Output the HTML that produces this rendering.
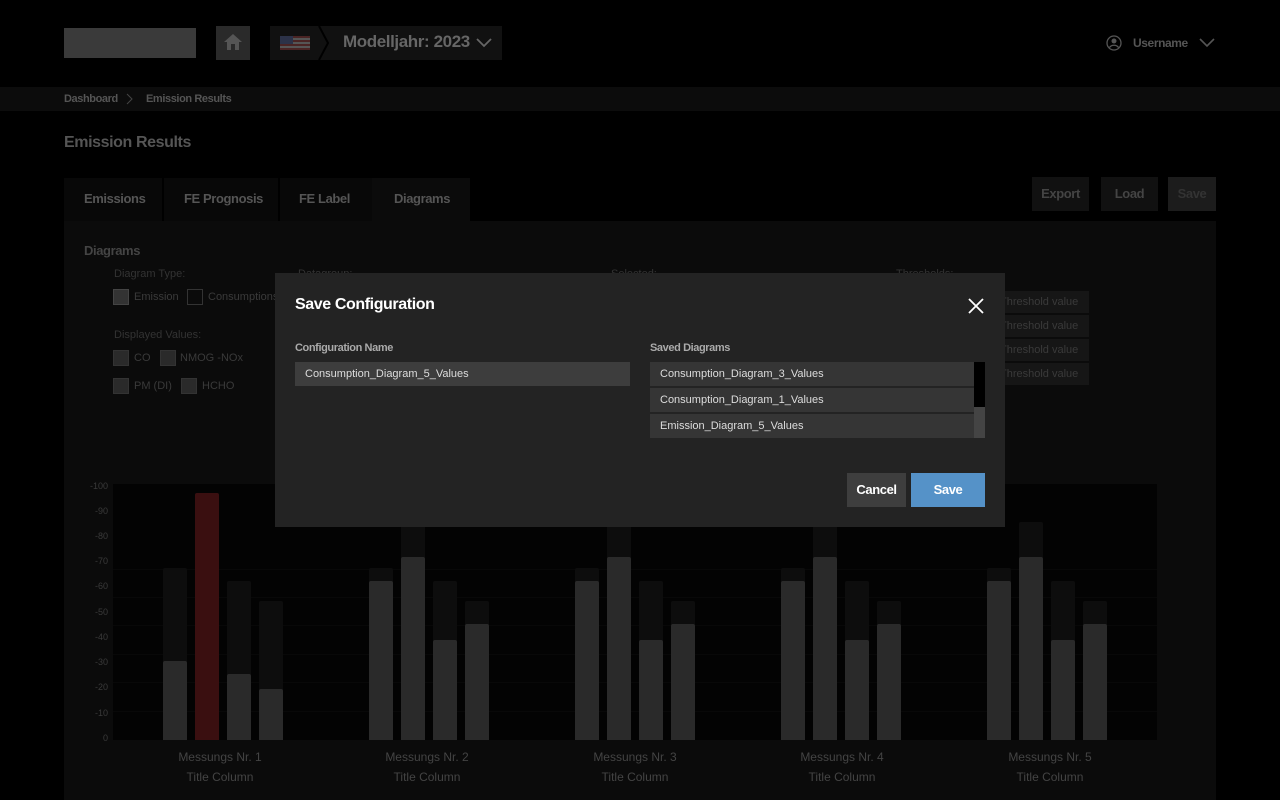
<!DOCTYPE html>
<html><head><style>
*{margin:0;padding:0;box-sizing:border-box}
body{width:1280px;height:800px;background:#000;font-family:"Liberation Sans",sans-serif;position:relative;overflow:hidden;color:#555}
.a{position:absolute}
.t{font-weight:bold;letter-spacing:-0.4px}
.bar{position:absolute;width:24px;border-radius:2px 2px 0 0}
.yl{position:absolute;left:78px;width:30px;text-align:right;font-size:9px;color:#3a3a3a}
.gl{position:absolute;left:113px;width:1044px;height:1px;background:#080808}
.lab{position:absolute;width:160px;text-align:center;font-size:12px;color:#444}
.cb{position:absolute;width:16px;height:16px;background:#2a2a2a;border:1px solid #333}
.sd{position:absolute;left:650px;width:324px;height:24px;background:#353535;color:#ddd;font-size:11px;line-height:24px;padding-left:10px}
.th{position:absolute;left:990px;width:99px;height:22px;background:#161616;color:#3a3a3a;font-size:11px;line-height:22px;padding-left:10px}
</style></head><body>
<div class="a" style="left:64px;top:28px;width:132px;height:30px;background:#3a3a3a"></div>
<div class="a" style="left:216px;top:26px;width:34px;height:34px;background:#2a2a2a"></div>
<svg class="a" style="left:222px;top:31px" width="22" height="22" viewBox="0 0 22 22"><path d="M11 3L2 11h3v8h12v-8h3z" fill="#555"/><rect x="9" y="13" width="4" height="6" fill="#2a2a2a"/></svg>
<div class="a" style="left:270px;top:26px;width:232px;height:34px;background:#111"></div>
<div class="a" style="left:280px;top:36px;width:30px;height:14px;background:repeating-linear-gradient(#4a2424 0 2px,#555 2px 4px)"></div>
<div class="a" style="left:280px;top:36px;width:13px;height:8px;background:#2c3248"></div>
<svg class="a" style="left:318px;top:26px" width="12" height="34"><path d="M1 0L10 17L1 34" stroke="#000" stroke-width="2" fill="none"/></svg>
<div class="a t" style="left:343px;top:32px;font-size:17px;color:#666">Modelljahr: 2023</div>
<svg class="a" style="left:475px;top:36px" width="18" height="12"><path d="M2 3l7 7 7-7" stroke="#666" stroke-width="1.8" fill="none"/></svg>
<svg class="a" style="left:1106px;top:35px" width="16" height="16"><circle cx="8" cy="8" r="7" stroke="#555" fill="none" stroke-width="1.3"/><circle cx="8" cy="6" r="2.5" fill="#555"/><path d="M3.5 12.5c2-3 7-3 9 0" stroke="#555" fill="none" stroke-width="1.3"/></svg>
<div class="a t" style="left:1133px;top:36px;font-size:12px;color:#555">Username</div>
<svg class="a" style="left:1198px;top:37px" width="18" height="12"><path d="M2 2l7 7 7-7" stroke="#555" stroke-width="1.6" fill="none"/></svg>
<div class="a" style="left:0;top:87px;width:1280px;height:24px;background:#0c0c0c"></div>
<div class="a t" style="left:64px;top:93px;font-size:11px;color:#555">Dashboard</div>
<svg class="a" style="left:125px;top:93px" width="10" height="12"><path d="M2 1l5 5-5 5" stroke="#444" fill="none"/></svg>
<div class="a t" style="left:146px;top:93px;font-size:11px;color:#555">Emission Results</div>
<div class="a t" style="left:64px;top:134px;font-size:16px;color:#555">Emission Results</div>
<div class="a" style="left:64px;top:178px;width:368px;height:43px;background:#080808"></div>
<div class="a" style="left:372px;top:178px;width:98px;height:43px;background:#0b0b0b"></div>
<div class="a" style="left:162px;top:178px;width:2px;height:43px;background:#000"></div>
<div class="a" style="left:278px;top:178px;width:2px;height:43px;background:#000"></div>
<div class="a t" style="left:84px;top:191px;font-size:13px;color:#555">Emissions</div>
<div class="a t" style="left:184px;top:191px;font-size:13px;color:#555">FE Prognosis</div>
<div class="a t" style="left:299px;top:191px;font-size:13px;color:#555">FE Label</div>
<div class="a t" style="left:394px;top:191px;font-size:13px;color:#555">Diagrams</div>
<div class="a t" style="left:1032px;top:177px;width:57px;height:34px;background:#111;text-align:center;line-height:34px;font-size:13px;color:#444">Export</div>
<div class="a t" style="left:1101px;top:177px;width:57px;height:34px;background:#111;text-align:center;line-height:34px;font-size:13px;color:#444">Load</div>
<div class="a t" style="left:1168px;top:177px;width:48px;height:34px;background:#1c1c1c;text-align:center;line-height:34px;font-size:13px;color:#333">Save</div>
<div class="a" style="left:64px;top:221px;width:1152px;height:579px;background:#0b0b0b"></div>
<div class="a t" style="left:84px;top:243px;font-size:13px;color:#444">Diagrams</div>
<div class="a" style="left:114px;top:268px;font-size:11px;color:#333">Diagram Type:</div>
<div class="a" style="left:298px;top:268px;font-size:11px;color:#333">Datagroup:</div>
<div class="a" style="left:611px;top:268px;font-size:11px;color:#333">Selected:</div>
<div class="a" style="left:896px;top:268px;font-size:11px;color:#333">Thresholds:</div>
<div class="cb" style="left:113px;top:289px;background:#333;border-color:#444"></div>
<div class="a" style="left:134px;top:291px;font-size:11px;color:#3a3a3a">Emission</div>
<div class="cb" style="left:187px;top:289px;background:#0b0b0b;border-color:#333"></div>
<div class="a" style="left:208px;top:291px;font-size:11px;color:#3a3a3a">Consumptions</div>
<div class="a" style="left:114px;top:329px;font-size:11px;color:#333">Displayed Values:</div>
<div class="cb" style="left:113px;top:350px"></div><div class="a" style="left:134px;top:352px;font-size:11px;color:#3a3a3a">CO</div>
<div class="cb" style="left:160px;top:350px"></div><div class="a" style="left:180px;top:352px;font-size:11px;color:#3a3a3a">NMOG -NOx</div>
<div class="cb" style="left:113px;top:378px"></div><div class="a" style="left:134px;top:380px;font-size:11px;color:#3a3a3a">PM (DI)</div>
<div class="cb" style="left:181px;top:378px"></div><div class="a" style="left:202px;top:380px;font-size:11px;color:#3a3a3a">HCHO</div>
<div class="th" style="top:291px">Threshold value</div>
<div class="th" style="top:315px">Threshold value</div>
<div class="th" style="top:339px">Threshold value</div>
<div class="th" style="top:363px">Threshold value</div>
<div class="a" style="left:113px;top:484px;width:1044px;height:256px;background:#030303"></div>
<div class="gl" style="top:569px"></div><div class="gl" style="top:597px"></div><div class="gl" style="top:625px"></div><div class="gl" style="top:654px"></div><div class="gl" style="top:682px"></div><div class="gl" style="top:711px"></div>
<div class="yl" style="top:481px">-100</div><div class="yl" style="top:506px">-90</div><div class="yl" style="top:531px">-80</div><div class="yl" style="top:556px">-70</div><div class="yl" style="top:581px">-60</div><div class="yl" style="top:607px">-50</div><div class="yl" style="top:632px">-40</div><div class="yl" style="top:657px">-30</div><div class="yl" style="top:682px">-20</div><div class="yl" style="top:708px">-10</div><div class="yl" style="top:733px">0</div>
<div class="bar" style="left:163px;top:568px;height:172px;background:#0d0d0d"></div>
<div class="bar" style="left:163px;top:661px;height:79px;background:#2a2a2a"></div>
<div class="bar" style="left:195px;top:493px;height:247px;background:#3a0f10"></div>
<div class="bar" style="left:227px;top:581px;height:159px;background:#0d0d0d"></div>
<div class="bar" style="left:227px;top:674px;height:66px;background:#2a2a2a"></div>
<div class="bar" style="left:259px;top:601px;height:139px;background:#0d0d0d"></div>
<div class="bar" style="left:259px;top:689px;height:51px;background:#2a2a2a"></div>
<div id="g"></div>
<script>
var h='';[369,575,781,987].forEach(function(x){
h+='<div class="bar" style="left:'+x+'px;top:568px;height:172px;background:#0d0d0d"></div>'+
'<div class="bar" style="left:'+x+'px;top:581px;height:159px;background:#2a2a2a"></div>'+
'<div class="bar" style="left:'+(x+32)+'px;top:522px;height:218px;background:#0d0d0d"></div>'+
'<div class="bar" style="left:'+(x+32)+'px;top:557px;height:183px;background:#2a2a2a"></div>'+
'<div class="bar" style="left:'+(x+64)+'px;top:581px;height:159px;background:#0d0d0d"></div>'+
'<div class="bar" style="left:'+(x+64)+'px;top:640px;height:100px;background:#2a2a2a"></div>'+
'<div class="bar" style="left:'+(x+96)+'px;top:601px;height:139px;background:#0d0d0d"></div>'+
'<div class="bar" style="left:'+(x+96)+'px;top:624px;height:116px;background:#2a2a2a"></div>';});
document.getElementById('g').outerHTML=h;
</script>
<div class="lab" style="left:140px;top:750px">Messungs Nr. 1</div><div class="lab" style="left:140px;top:770px">Title Column</div>
<div class="lab" style="left:347px;top:750px">Messungs Nr. 2</div><div class="lab" style="left:347px;top:770px">Title Column</div>
<div class="lab" style="left:555px;top:750px">Messungs Nr. 3</div><div class="lab" style="left:555px;top:770px">Title Column</div>
<div class="lab" style="left:762px;top:750px">Messungs Nr. 4</div><div class="lab" style="left:762px;top:770px">Title Column</div>
<div class="lab" style="left:970px;top:750px">Messungs Nr. 5</div><div class="lab" style="left:970px;top:770px">Title Column</div>
<div class="a" style="left:275px;top:273px;width:730px;height:254px;background:#232323"></div>
<div class="a t" style="left:295px;top:296px;font-size:16px;color:#fff">Save Configuration</div>
<svg class="a" style="left:967px;top:297px" width="18" height="18"><path d="M2 2l14 14M16 2L2 16" stroke="#fff" stroke-width="1.8"/></svg>
<div class="a t" style="left:295px;top:342px;font-size:11px;color:#aaa">Configuration Name</div>
<div class="a" style="left:295px;top:362px;width:335px;height:24px;background:#3d3d3d;color:#ddd;font-size:11px;line-height:24px;padding-left:10px">Consumption_Diagram_5_Values</div>
<div class="a t" style="left:650px;top:342px;font-size:11px;color:#aaa">Saved Diagrams</div>
<div class="sd" style="top:362px">Consumption_Diagram_3_Values</div>
<div class="sd" style="top:388px">Consumption_Diagram_1_Values</div>
<div class="sd" style="top:414px">Emission_Diagram_5_Values</div>
<div class="a" style="left:974px;top:362px;width:11px;height:76px;background:#444"></div>
<div class="a" style="left:974px;top:362px;width:11px;height:45px;background:#000"></div>
<div class="a t" style="left:847px;top:473px;width:59px;height:34px;background:#3e3e3e;color:#fff;font-size:13px;text-align:center;line-height:34px">Cancel</div>
<div class="a t" style="left:911px;top:473px;width:74px;height:34px;background:#5592c8;color:#fff;font-size:13px;text-align:center;line-height:34px">Save</div>
</body></html>
